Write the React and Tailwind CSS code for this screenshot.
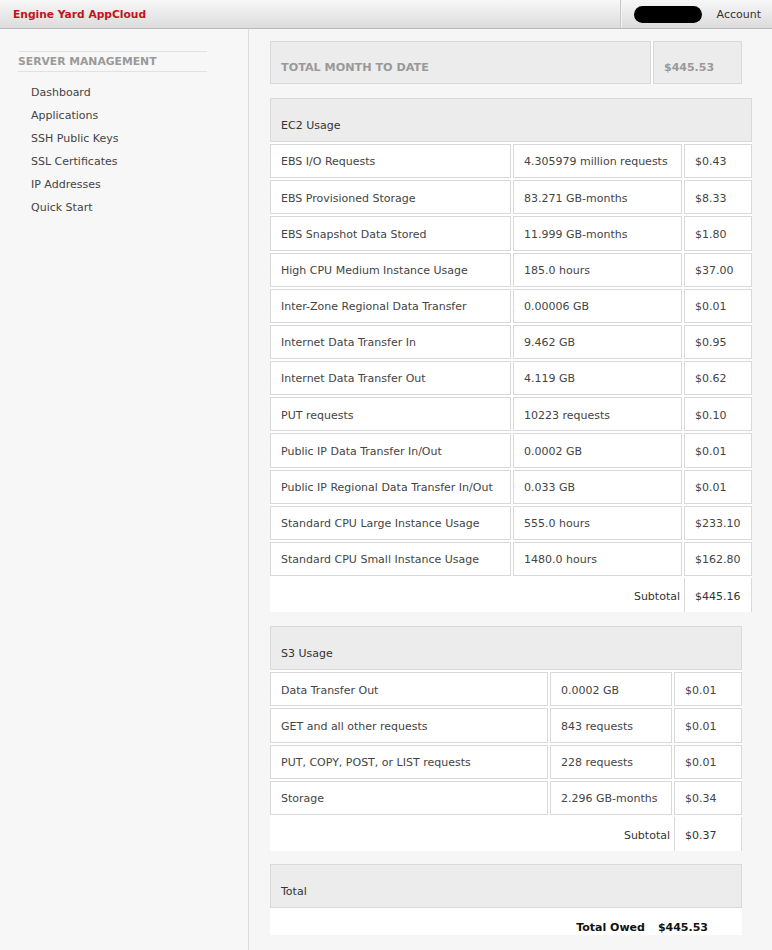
import React from "react";

const ec2 = [
  ["EBS I/O Requests", "4.305979 million requests", "$0.43"],
  ["EBS Provisioned Storage", "83.271 GB-months", "$8.33"],
  ["EBS Snapshot Data Stored", "11.999 GB-months", "$1.80"],
  ["High CPU Medium Instance Usage", "185.0 hours", "$37.00"],
  ["Inter-Zone Regional Data Transfer", "0.00006 GB", "$0.01"],
  ["Internet Data Transfer In", "9.462 GB", "$0.95"],
  ["Internet Data Transfer Out", "4.119 GB", "$0.62"],
  ["PUT requests", "10223 requests", "$0.10"],
  ["Public IP Data Transfer In/Out", "0.0002 GB", "$0.01"],
  ["Public IP Regional Data Transfer In/Out", "0.033 GB", "$0.01"],
  ["Standard CPU Large Instance Usage", "555.0 hours", "$233.10"],
  ["Standard CPU Small Instance Usage", "1480.0 hours", "$162.80"],
];

const s3 = [
  ["Data Transfer Out", "0.0002 GB", "$0.01"],
  ["GET and all other requests", "843 requests", "$0.01"],
  ["PUT, COPY, POST, or LIST requests", "228 requests", "$0.01"],
  ["Storage", "2.296 GB-months", "$0.34"],
];

const nav = ["Dashboard", "Applications", "SSH Public Keys", "SSL Certificates", "IP Addresses", "Quick Start"];

function Cell({ children, className = "" }) {
  return (
    <div className={"h-[34.18px] border border-[#d9d9d9] bg-white flex items-center pl-[10px] pt-[3px] whitespace-nowrap " + className}>
      {children}
    </div>
  );
}

function UsageTable({ title, rows, width, subtotal, colsClass }) {
  return (
    <div className={"bg-white flex flex-col gap-[2px] " + width}>
      <div className="h-[44px] border border-[#d9d9d9] bg-[#ececec] flex items-center pt-[13px] pl-[10px] text-[#333]">
        {title}
      </div>
      {rows.map((r, i) => (
        <div key={i} className={"grid gap-x-[2px] " + colsClass}>
          <Cell>{r[0]}</Cell>
          <Cell>{r[1]}</Cell>
          <Cell>{r[2]}</Cell>
        </div>
      ))}
      <div className={"grid gap-x-[2px] " + colsClass}>
        <div className="col-span-2 h-[34.18px] flex items-center justify-end pr-[2px] pt-[4px] text-[#333]">Subtotal</div>
        <div className="h-[34.18px] border-x border-[#d9d9d9] flex items-center pl-[10px] pt-[4px] text-[#333]">{subtotal}</div>
      </div>
    </div>
  );
}

export default function App() {
  return (
    <div className="w-[772px] h-[950px] overflow-hidden bg-[#f6f6f6] text-[11px] text-[#444] font-['DejaVu_Sans',Verdana,sans-serif] flex flex-col">
      <div className="h-[29px] shrink-0 flex items-stretch border-b border-[#b9b9b9] bg-gradient-to-b from-[#f7f7f7] to-[#dcdcdc]">
        <div className="pl-[13px] pt-[2px] flex items-center font-bold text-[#c4121b] text-[10.7px]">Engine Yard AppCloud</div>
        <div className="ml-auto w-[2px] border-l border-[#c8c8c8] bg-[#f4f4f4] mr-[12px]"></div>
        <div className="flex items-center">
          <div className="w-[68px] h-[17px] rounded-full bg-black"></div>
          <div className="ml-[15px] mr-[11px] pt-[2px] text-[#333]">Account</div>
        </div>
      </div>
      <div className="flex flex-1">
        <div className="w-[249px] shrink-0 border-r border-[#dcdcdc] bg-[#f7f7f7] pt-[22px]">
          <div className="ml-[18px] w-[189px] h-[21px] border-y border-[#e2e2e2] flex items-center pt-[2px] text-[10.8px] font-bold text-[#9a9a9a]">
            SERVER MANAGEMENT
          </div>
          <div className="pl-[31px] pt-[10px] flex flex-col">
            {nav.map((n) => (
              <div key={n} className="h-[23px] flex items-center text-[#444]">{n}</div>
            ))}
          </div>
        </div>
        <div className="flex-1 pl-[21px] pt-[12px] flex flex-col">
          <div className="w-[472px] bg-white flex gap-[2px]">
            <div className="w-[381px] h-[43px] border border-[#d9d9d9] bg-[#ececec] flex items-center pt-[12px] pl-[10px] font-bold text-[#999] text-[11.2px]">
              TOTAL MONTH TO DATE
            </div>
            <div className="flex-1 h-[43px] border border-[#d9d9d9] bg-[#ececec] flex items-center pt-[12px] pl-[10px] font-bold text-[#999]">
              $445.53
            </div>
          </div>
          <div className="mt-[14px]">
            <UsageTable title="EC2 Usage" rows={ec2} width="w-[482px]" subtotal="$445.16" colsClass="grid-cols-[241px_169px_68px]" />
          </div>
          <div className="mt-[14px]">
            <UsageTable title="S3 Usage" rows={s3} width="w-[472px]" subtotal="$0.37" colsClass="grid-cols-[278px_122px_68px]" />
          </div>
          <div className="mt-[13px] w-[472px] bg-white flex flex-col gap-[3px]">
            <div className="h-[44px] border border-[#d9d9d9] bg-[#ececec] flex items-center pt-[13px] pl-[10px] text-[#333]">Total</div>
            <div className="h-[24px] flex items-center justify-end pt-[11px] pr-[34px] gap-[13px] font-bold text-[#111]">
              <span>Total Owed</span>
              <span>$445.53</span>
            </div>
          </div>
        </div>
      </div>
    </div>
  );
}
